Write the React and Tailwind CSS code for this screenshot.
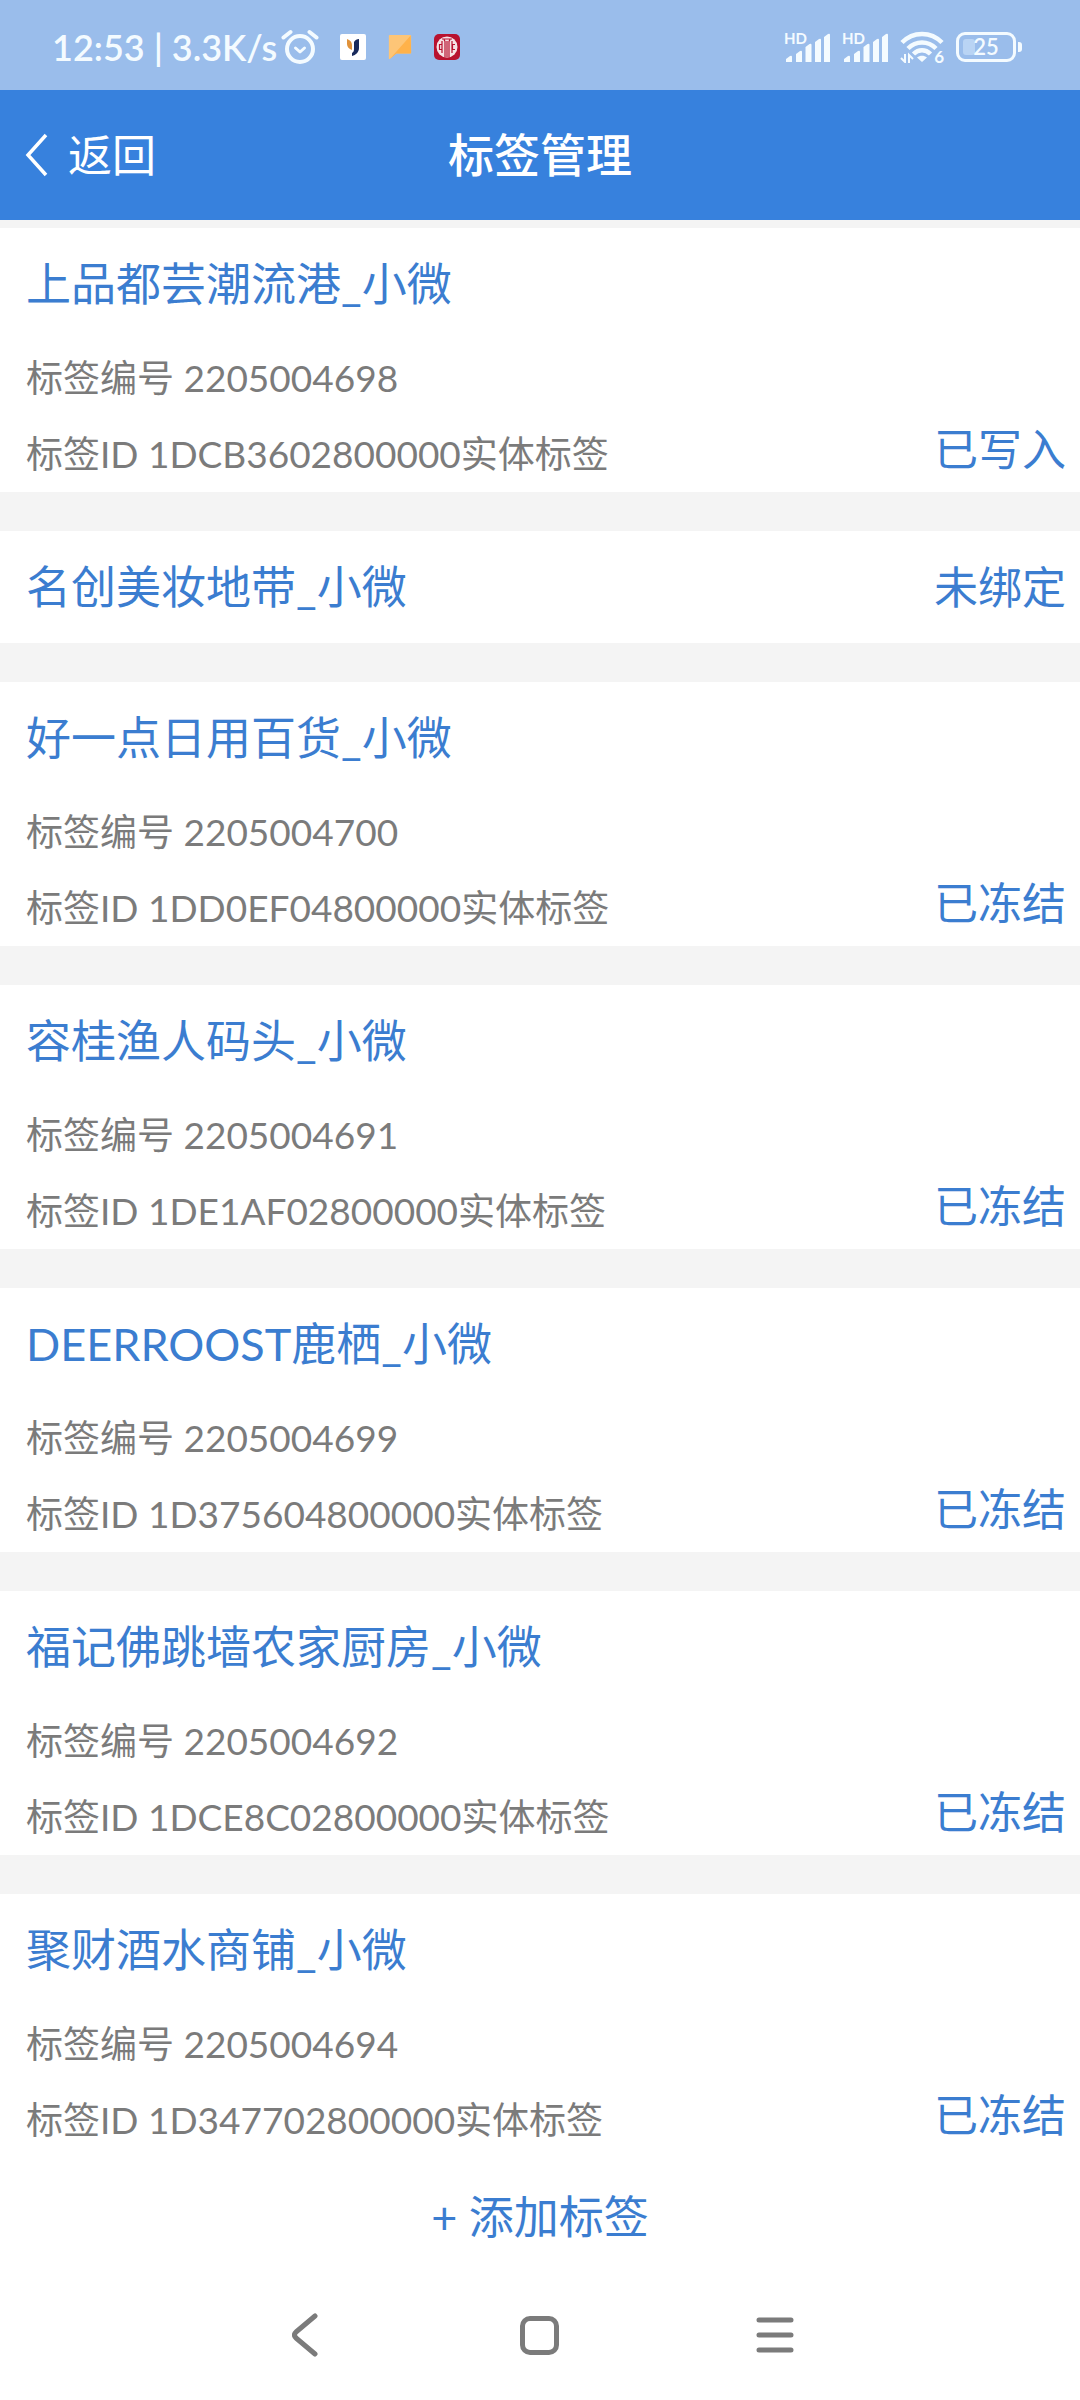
import React from "react";

const tags = [
  { name: '上品都芸潮流港_小微', number: '2205004698', id: '1DCB3602800000', status: '已写入' },
  { name: '名创美妆地带_小微', status: '未绑定' },
  { name: '好一点日用百货_小微', number: '2205004700', id: '1DD0EF04800000', status: '已冻结' },
  { name: '容桂渔人码头_小微', number: '2205004691', id: '1DE1AF02800000', status: '已冻结' },
  { name: 'DEERROOST鹿栖_小微', number: '2205004699', id: '1D375604800000', status: '已冻结' },
  { name: '福记佛跳墙农家厨房_小微', number: '2205004692', id: '1DCE8C02800000', status: '已冻结' },
  { name: '聚财酒水商铺_小微', number: '2205004694', id: '1D347702800000', status: '已冻结' },
];

function AlarmIcon() {
  return (
    <svg className="w-[38px] h-9" viewBox="0 0 38 36" fill="none" stroke="currentColor" strokeLinecap="round">
      <circle cx="19" cy="20" r="13" strokeWidth="4" />
      <path d="M2.500 8.500 9.500 3M35.500 8.500 28.500 3" strokeWidth="4" />
      <path d="M14.500 19 19 23l4.500-4" strokeWidth="3" strokeLinejoin="round" />
    </svg>
  );
}

function LeafAppIcon() {
  return (
    <svg className="size-[26px]" viewBox="0 0 26 26">
      <rect width="26" height="26" rx="2" fill="#fff" />
      <path d="M7 5c3 1 5 3 5 6v5c-3-1-5-3-5-6z" fill="#e0923a" />
      <path d="M19 5v9c0 4-3 7-7 8v-3c2-1 2-3 2-5V8c1-2 3-3 5-3z" fill="#182a5c" />
    </svg>
  );
}

function MessageAppIcon() {
  return (
    <svg className="size-[26px]" viewBox="0 0 26 28">
      <path d="M2 1h22a1 1 0 0 1 1 1v18a1 1 0 0 1-1 1H9l-7 6a1 1 0 0 1-1-1V2a1 1 0 0 1 1-1z" fill="#fdc577" />
      <path d="M24.500 1.500 25 20a1 1 0 0 1-1 1H9l-7 6z" fill="#ffb24a" />
    </svg>
  );
}

function BankAppIcon() {
  return (
    <svg className="size-[26px]" viewBox="0 0 26 26" fill="none">
      <rect width="26" height="26" rx="5" fill="#b8122f" />
      <circle cx="13" cy="13" r="10.500" fill="#f6e3e6" />
      <g stroke="#b8122f" strokeWidth="1.200">
        <path d="M8 5h10M10 5.500l1 2V23M16 5.500l-1 2V23M13 7v16" />
        <path d="M8.500 10.500H5.500v5h3M8 7v12M18 7v12M21 10.500h-2.500v5H21" />
      </g>
    </svg>
  );
}

function SignalIcon() {
  return (
    <div className="relative w-[46px] h-[30px]">
      <svg className="w-full h-full" viewBox="0 0 46 30" fill="currentColor">
        <path d="M2 27l4-3q2-1 2 1v5H2zM12 22l4-3q2-1 2 1v10h-6zM21.500 15l4-3q2-1 2 1v17h-6zM31 10l4-3q2-1 2 1v22h-6zM40 5l4-3q2-1 2 1v27h-6z" />
      </svg>
      <span className="absolute left-0 top-0 text-[15px] leading-[12px] font-bold">HD</span>
    </div>
  );
}

function WifiIcon() {
  return (
    <div className="relative w-[44px] h-[32px]">
      <svg className="w-full h-full" viewBox="0 0 44 32" fill="none" stroke="currentColor" strokeWidth="4.500">
        <path d="M2 11.500c11-11.500 29-11.500 40 0" />
        <path d="M8 17.500c8-8 20-8 28 0" />
        <path d="M13.500 23c5-5 12-5 17 0" />
        <path d="M22 31l-5-4.500c3-2.500 7-2.500 10 0z" fill="currentColor" stroke="none" />
        <path d="M5 23v8l-4-4M9 32v-8l4 4" strokeWidth="2" />
      </svg>
      <span className="absolute right-0 bottom-0 text-[17px] leading-[13px] font-bold">6</span>
    </div>
  );
}

function BatteryIcon() {
  return (
    <div className="flex items-center gap-[2px]">
      <div className="relative flex items-center justify-center w-[60px] h-[30px] border-[3px] border-current rounded-[9px]">
        <span className="absolute left-1 top-1 w-3 h-4 rounded-[3px] bg-[#b9d4f4]" />
        <span className="relative text-[22px] leading-6 font-semibold">25</span>
      </div>
      <span className="w-[4px] h-[10px] rounded-r-[3px] bg-current" />
    </div>
  );
}

function StatusBar() {
  return (
    <div className="flex items-center justify-between h-[90px] pt-1 pl-[52px] pr-[58px] bg-[#9abdeb] text-[#f4fbff]">
      <div className="flex items-center">
        <span className="text-[36px] leading-[40px] font-semibold whitespace-nowrap">12:53 | 3.3K/s</span>
        <div className="flex items-center ml-1 gap-[21px]">
          <AlarmIcon />
          <LeafAppIcon />
          <MessageAppIcon />
          <BankAppIcon />
        </div>
      </div>
      <div className="flex items-center gap-3">
        <SignalIcon />
        <SignalIcon />
        <WifiIcon />
        <BatteryIcon />
      </div>
    </div>
  );
}

function Header() {
  return (
    <header className="grid grid-cols-3 items-center h-[130px] px-6 bg-[#3781dd] text-white">
      <button type="button" className="flex items-center justify-self-start gap-5 text-[44px] leading-[64px]">
        <svg className="w-6 h-11" viewBox="0 0 24 44" fill="none" stroke="currentColor" strokeWidth="3.500">
          <path d="M22 2 4 22l18 20" />
        </svg>
        返回
      </button>
      <h1 className="text-center text-[46px] leading-[64px] font-medium whitespace-nowrap">标签管理</h1>
    </header>
  );
}

function TagCard({ tag }) {
  return (
    <li className="flex justify-between pl-[26px] pr-[14px] bg-white">
      <div>
        <h2 className="text-[45px] leading-[112px] text-[#3b7dd0]">{tag.name}</h2>
        {tag.number && (
          <div className="text-[37px] leading-[76px] text-[#7b7b7b]">
            <p>标签编号 {tag.number}</p>
            <p>标签ID {tag.id}实体标签</p>
          </div>
        )}
      </div>
      <a
        href="#status"
        className={`text-[44px] text-[#3b7dd0] ${tag.number ? 'self-end leading-[86px]' : 'leading-[112px]'}`}
      >
        {tag.status}
      </a>
    </li>
  );
}

function NavBar() {
  return (
    <nav className="grid grid-cols-3 items-center h-[118px] px-[188px] text-[#7b7b7b]">
      <button type="button" aria-label="Back" className="justify-self-center">
        <svg className="w-[26px] h-11" viewBox="0 0 26 44" fill="none" stroke="currentColor" strokeWidth="5" strokeLinecap="round" strokeLinejoin="round">
          <path d="M23 3 4 19q-3 3 0 6l19 16" />
        </svg>
      </button>
      <button type="button" aria-label="Home" className="justify-self-center">
        <span className="block w-[39px] h-[39px] border-[5px] border-current rounded-[10px]" />
      </button>
      <button type="button" aria-label="Recent" className="justify-self-center">
        <svg className="w-[38px] h-9" viewBox="0 0 38 36" stroke="currentColor" strokeWidth="5" strokeLinecap="round">
          <path d="M3 3h32M3 18h32M3 33h32" />
        </svg>
      </button>
    </nav>
  );
}

function App() {
  return (
    <div className="min-h-screen bg-white font-[Lato,'Noto_Sans_CJK_SC',sans-serif]" lang="zh-CN">
      <StatusBar />
      <Header />
      <main>
        <ul className="flex flex-col gap-[39px] pt-2 bg-[#f4f4f4]">
          {tags.map((tag) => (
            <TagCard key={tag.name} tag={tag} />
          ))}
        </ul>
        <button type="button" className="block w-full text-[45px] leading-[118px] text-[#3b7dd0]">
          + 添加标签
        </button>
      </main>
      <NavBar />
    </div>
  );
}

export default App;
